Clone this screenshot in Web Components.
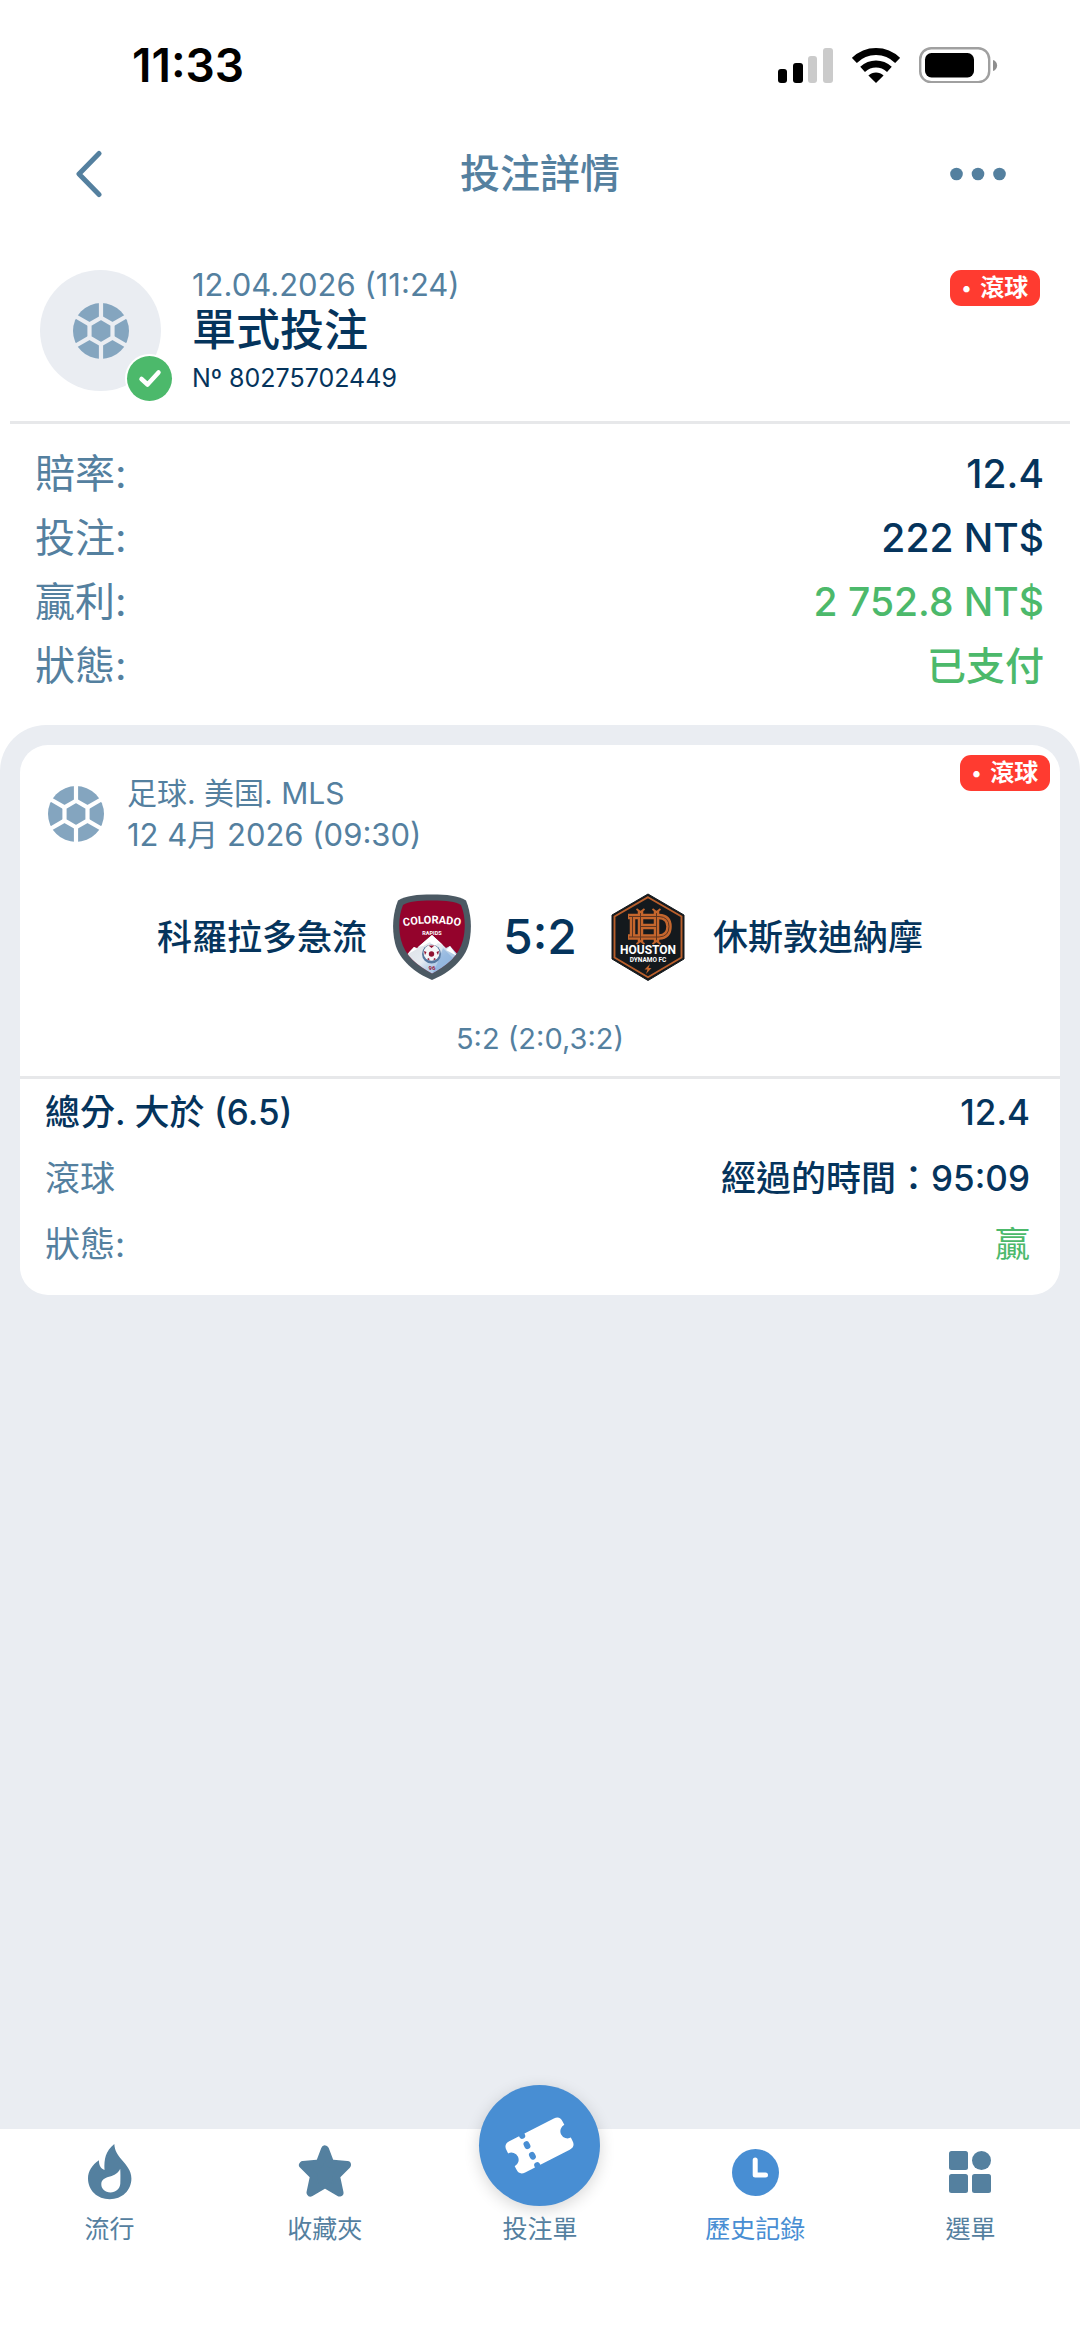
<!DOCTYPE html>
<html lang="zh-Hant">
<head>
<meta charset="utf-8">
<meta name="viewport" content="width=device-width, initial-scale=1">
<title>投注詳情</title>
<style>
  :root {
    --steel: #54809f;
    --navy: #05345c;
    --green: #4cb96b;
    --blue: #488ed3;
    --red: #ff3b30;
    --panel: #eaedf2;
    --line: #e7e8ea;
    --ball: #84a5bf;
  }
  html, body { margin: 0; background: #fff; }
  body {
    min-height: 100vh;
    display: flex;
    flex-direction: column;
    font-family: Inter, "Noto Sans CJK TC", sans-serif;
    color: var(--navy);
  }
</style>
</head>
<body>
<status-bar>11:33</status-bar>
<page-header>投注詳情</page-header>

<bet-summary>
  <span slot="date">12.04.2026 (11:24)</span>
  <span slot="title">單式投注</span>
  <span slot="number">Nº 80275702449</span>
  <live-badge slot="badge">滾球</live-badge>
</bet-summary>

<info-list>
  <info-row><span slot="label">賠率:</span>12.4</info-row>
  <info-row><span slot="label">投注:</span>222 NT$</info-row>
  <info-row tone="good"><span slot="label">贏利:</span>2 752.8 NT$</info-row>
  <info-row tone="good"><span slot="label">狀態:</span>已支付</info-row>
</info-list>

<event-panel>
  <match-card>
    <live-badge slot="badge">滾球</live-badge>
    <span slot="league">足球. 美国. MLS</span>
    <span slot="date">12 4月 2026 (09:30)</span>
    <span slot="home">科羅拉多急流</span>
    <rapids-crest slot="home-crest"></rapids-crest>
    <span slot="score">5:2</span>
    <dynamo-crest slot="away-crest"></dynamo-crest>
    <span slot="away">休斯敦迪納摩</span>
    <span slot="periods">5:2 (2:0,3:2)</span>
    <info-row size="small" strong slot="rows"><span slot="label">總分. 大於 (6.5)</span>12.4</info-row>
    <info-row size="small" slot="rows"><span slot="label">滾球</span>經過的時間：95:09</info-row>
    <info-row size="small" tone="won" slot="rows"><span slot="label">狀態:</span>贏</info-row>
  </match-card>
</event-panel>

<tab-bar>
  <tab-item icon="flame">流行</tab-item>
  <tab-item icon="star">收藏夾</tab-item>
  <tab-item icon="ticket">投注單</tab-item>
  <tab-item icon="clock" active>歷史記錄</tab-item>
  <tab-item icon="grid">選單</tab-item>
</tab-bar>

<script>
const define = (name, html) => customElements.define(name, class extends HTMLElement {
  constructor() {
    super();
    this.attachShadow({ mode: 'open' }).innerHTML = html;
  }
});

define('status-bar', `
  <style>
    :host { display: flex; align-items: center; justify-content: space-between; height: 130px;
      padding: 0 82px 0 132px; box-sizing: border-box; color: #000; font-size: 46px; font-weight: 600; line-height: 52px; }
    .icons { display: flex; align-items: center; gap: 19px; }
    svg { display: block; }
  </style>
  <span><slot></slot></span>
  <div class="icons">
    <svg width="55" height="36" viewBox="0 0 55 36" aria-hidden="true">
      <rect x="0" y="22" width="9" height="14" rx="3"/><rect x="15" y="16" width="10" height="20" rx="3"/>
      <g fill="#cbcbcb"><rect x="30" y="9" width="9" height="27" rx="3"/><rect x="45" y="1" width="10" height="35" rx="3"/></g>
    </svg>
    <svg width="48" height="36" viewBox="0 0 48 36" aria-hidden="true">
      <g fill="none" stroke="#000" stroke-width="7"><path d="M2.4 13.4C14.5 1.5 33.500 1.500 45.600 13.400"/><path d="M10.600 22.400C18.500 15.200 29.500 15.200 37.400 22.400"/></g>
      <path d="M16.400 28.600C20.500 24.600 27.500 24.600 31.600 28.600L24 36Z"/>
    </svg>
    <svg width="79" height="36" viewBox="0 0 79 36" aria-hidden="true">
      <rect x="1.200" y="1.200" width="69" height="34" rx="11" fill="none" stroke="#a0a0a0" stroke-width="2.400"/>
      <rect x="6" y="6" width="49" height="24.500" rx="6.500"/>
      <path d="M74 13C79.500 14.500 79.500 22.500 74 24Z" fill="#8e8e8e"/>
    </svg>
  </div>`);

define('page-header', `
  <style>
    :host { display: grid; grid-template-columns: 1fr auto 1fr; align-items: center; height: 88px;
      padding: 0 66px; box-sizing: border-box; color: var(--steel); }
    h1 { margin: 0; font-size: 40px; font-weight: 500; line-height: 60px; }
    button { border: 0; padding: 8px; background: none; color: inherit; justify-self: start; }
    button:last-child { justify-self: end; }
    svg { display: block; }
  </style>
  <button aria-label="返回"><svg width="30" height="48" viewBox="0 0 30 48"><path d="M25 3.500L5 24L25 44.500" fill="none" stroke="currentColor" stroke-width="5" stroke-linecap="round" stroke-linejoin="round"/></svg></button>
  <h1><slot></slot></h1>
  <button aria-label="更多"><svg width="56" height="14" viewBox="0 0 56 14" fill="currentColor"><circle cx="6.500" cy="7" r="6.300"/><circle cx="28" cy="7" r="6.300"/><circle cx="49.500" cy="7" r="6.300"/></svg></button>`);

define('ball-icon', `
  <style>:host { display: block; color: var(--ball); } svg { display: block; }</style>
  <svg width="56" height="56" viewBox="-28 -28 56 56" aria-hidden="true">
    <mask id="seams" maskUnits="userSpaceOnUse" x="-28" y="-28" width="56" height="56">
      <rect x="-28" y="-28" width="56" height="56" fill="#fff"/>
      <g fill="none" stroke="#000" stroke-width="4.200">
        <path stroke-linejoin="round" d="M0-13.300L11.500-6.650V6.650L0 13.300L-11.500 6.650V-6.650Z"/>
        <path d="M0-13V-30M0 13V30M11.500-6.650L26-15M11.500 6.650L26 15M-11.500 6.650L-26 15M-11.500-6.650L-26-15"/>
      </g>
    </mask>
    <circle r="28" fill="currentColor" mask="url(#seams)"/>
  </svg>`);

define('live-badge', `
  <style>
    :host { display: inline-flex; align-items: center; justify-content: center; gap: 9px; width: 90px; height: 36px;
      border-radius: 11px; background: var(--red); color: #fff; font-size: 24px; font-weight: 700; line-height: 34px; }
    i { font-style: normal; font-size: 20px; }
  </style>
  <i>•</i><span><slot></slot></span>`);

define('bet-summary', `
  <style>
    :host { display: flex; align-items: flex-start; margin: 0 10px; padding: 52px 30px 25px; border-bottom: 3px solid var(--line); }
    .avatar { position: relative; display: grid; place-items: center; width: 121px; height: 121px; border-radius: 50%; background: var(--panel); }
    .check { position: absolute; right: -13px; bottom: -12px; }
    .text { flex: 1; margin-left: 31px; }
    .date { font-size: 31px; line-height: 30px; color: var(--steel); }
    h2 { margin: 0; font-size: 44px; font-weight: 500; line-height: 60px; }
    .number { font-size: 25px; line-height: 36px; }
  </style>
  <div class="avatar"><ball-icon></ball-icon>
    <svg class="check" width="49" height="49" viewBox="0 0 49 49" role="img" aria-label="已支付"><circle cx="24.500" cy="24.500" r="24.500" fill="#fff"/><circle cx="24.500" cy="24.500" r="22.500" fill="#4cb96b"/><path d="M16.500 25L22.500 30.500L33.500 18.500" fill="none" stroke="#fff" stroke-width="4.500" stroke-linecap="round" stroke-linejoin="round"/></svg>
  </div>
  <div class="text">
    <div class="date"><slot name="date"></slot></div>
    <h2><slot name="title"></slot></h2>
    <div class="number"><slot name="number"></slot></div>
  </div>
  <slot name="badge"></slot>`);

define('info-list', `
  <style>:host { display: block; padding: 18px 36px 27px 35px; }</style><slot></slot>`);

define('info-row', `
  <style>
    :host { display: flex; justify-content: space-between; font-size: 40px; line-height: 64px; }
    .label { color: var(--steel); }
    .value { font-size: 39px; font-weight: 500; }
    :host([tone]) .value { color: var(--green); }
    :host([tone="won"]) .value { font-weight: 400; }
    :host([size="small"]) { font-size: 35px; line-height: 66px; }
    :host([size="small"]) .value { font-size: 35px; }
    :host([strong]) .label { color: inherit; font-weight: 500; }
  </style>
  <span class="label"><slot name="label"></slot></span><span class="value"><slot></slot></span>`);

define('event-panel', `
  <style>:host { display: block; flex: 1; padding: 20px; border-radius: 46px 46px 0 0; background: var(--panel); }</style><slot></slot>`);

define('match-card', `
  <style>
    :host { display: block; position: relative; padding: 27px 0 18px; border-radius: 28px; background: #fff; }
    .badge { position: absolute; top: 10px; right: 10px; display: flex; }
    header { display: flex; align-items: center; gap: 23px; padding: 0 28px; color: var(--steel); font-size: 30px; line-height: 42px; }
    .date { font-size: 31px; }
    .teams { display: grid; grid-template-columns: 1fr auto 1fr; align-items: center; gap: 28px; margin-top: 38px; font-size: 35px; font-weight: 500; line-height: 50px; }
    .side { display: flex; align-items: center; gap: 22px; }
    .home { justify-content: flex-end; }
    .score { font-size: 48px; }
    .periods { padding: 39px 0 17px; text-align: center; color: var(--steel); font-size: 29px; line-height: 40px; border-bottom: 3px solid var(--line); }
    .rows { padding: 0 30px 0 25px; }
  </style>
  <div class="badge"><slot name="badge"></slot></div>
  <header><ball-icon></ball-icon><div><div><slot name="league"></slot></div><div class="date"><slot name="date"></slot></div></div></header>
  <div class="teams">
    <div class="side home"><slot name="home"></slot><slot name="home-crest"></slot></div>
    <div class="score"><slot name="score"></slot></div>
    <div class="side"><slot name="away-crest"></slot><slot name="away"></slot></div>
  </div>
  <div class="periods"><slot name="periods"></slot></div>
  <div class="rows"><slot name="rows"></slot></div>`);

const crestStyle = `<style>:host { display: block; } svg { display: block; overflow: visible; }
  text { font-family: Roboto, "Liberation Sans", sans-serif; font-weight: 700; text-anchor: middle; }</style>`;

define('rapids-crest', crestStyle + `
  <svg width="86" height="86" viewBox="0 0 86 86" role="img">
    <defs><linearGradient id="snow" x1="0" x2="1" y1="0" y2="1"><stop offset="0" stop-color="#d9dde2"/><stop offset=".45" stop-color="#e6ebf1"/><stop offset=".6" stop-color="#b7cfe8"/><stop offset="1" stop-color="#8fb4dc"/></linearGradient>
    <clipPath id="in"><path d="M43 6.500C58 6.500 66 7.500 72 11C76 21 77 33 74 46C70 62 57 72 43 79.500C29 72 16 62 12 46C9 33 10 21 14 11C20 7.500 28 6.500 43 6.500Z"/></clipPath></defs>
    <path fill="#4b5963" d="M43 .5C58 .5 69 1.500 77 6.500C82 19 83.500 34 80 49C76 66 60 79 43 86C26 79 10 66 6 49C2.500 34 4 19 9 6.500C17 1.500 28 .5 43 .5Z"/>
    <g clip-path="url(#in)">
      <path fill="#94032c" d="M5 0H81V86H5Z"/>
      <path fill="url(#snow)" d="M16 63L21 57L25 53L28 54L43 41L57 54L61 52L70 62L60 86H28Z"/>
      <path fill="#fff" d="M43 41L54 51L49 49L45 53L41 48L34 52L29 53ZM25 53L19 60L28 55ZM61 52L57 56L68 62Z"/>
      <path fill="#7eaadb" opacity=".55" d="M54 54L66 66L43 80L48 70Z"/>
    </g>
    <circle cx="42.500" cy="60" r="9.500" fill="#55779f"/><circle cx="42.500" cy="58.800" r="8" fill="#f5f5f7"/>
    <g fill="#8f1231"><circle cx="42.500" cy="60" r="2.700"/><path d="M39.500 51.500L45.500 51.500L42.500 54ZM35 57L37.500 58L36 61ZM50 57L47.500 58L49 61ZM38 65L40 64L40.500 66.500ZM47 65L45 64L44.500 66.500Z"/></g>
    <path id="arc" d="M11 33Q43 26 75 33" fill="none"/>
    <text font-size="11" fill="#fff"><textPath href="#arc" startOffset="50%">COLORADO</textPath></text>
    <text x="43" y="40.500" font-size="5.500" fill="#fff">RAPIDS</text>
    <text x="43" y="76" font-size="6" fill="#94203b">96</text>
  </svg>`);

define('dynamo-crest', crestStyle + `
  <svg width="86" height="86" viewBox="0 0 86 86" role="img">
    <path fill="#14191d" stroke="#14191d" stroke-linejoin="round" d="M43 0L79 21V65L43 86.500L7 65V21Z"/>
    <path fill="none" stroke="#b95f2c" stroke-width="1.900" d="M43 3.200L76.500 22.500V63.500L43 83.200L9.500 63.500V22.500Z"/>
    <g fill="none" stroke="#c4662d" stroke-width="5.500">
      <path d="M23 22.500H54Q64 23 64 32.500Q64 42.500 54 43H23"/><path d="M27.500 21V45M35.500 17V48M51.500 17V48M35.500 32.500H51.500"/>
    </g>
    <g fill="none" stroke="#5e3520" stroke-width="1">
      <path d="M24 22.500H54Q64 23 64 32.500Q64 42.500 54 43H24M27.500 23V43M35.500 18V47M51.500 18V47M35.500 32.500H51.500"/>
    </g>
    <g fill="none" stroke="#c4662d" stroke-width="1.800"><path d="M31.500 15L35.500 18L39.500 15M47.500 15L51.500 18L55.500 15M31.500 50L35.500 47L39.500 50M47.500 50L51.500 47L55.500 50"/></g>
    <text x="43" y="60" font-size="12" fill="#fff">HOUSTON</text>
    <text x="43" y="67.500" font-size="6.500" fill="#fff">DYNAMO FC</text>
    <path fill="#c4662d" d="M45 70L39.500 75.500H42.500L41 80L46.500 74H43.500Z"/>
  </svg>`);

define('tab-bar', `
  <style>
    :host { display: block; background: #fff; }
    nav { display: grid; grid-template-columns: repeat(5, 1fr); padding: 13px 2px 93px; }
  </style>
  <nav><slot></slot></nav>`);

const glyphs = {
  flame: `<svg width="44" height="56" viewBox="0 0 44 56"><path fill="currentColor" fill-rule="evenodd" d="M26.300 0C17.500 7 16 15 16.500 26C12.500 24.500 10.800 21 11 16.300C4 21 0 27.500 0 34.500C0 46.500 9.500 55.200 21.700 55.200C34 55.200 43.400 46.500 43.400 34.500C43.400 26 38 21 33.500 15.500C29.500 10.500 26.800 7 26.300 0ZM32.200 24.700C32.500 29 32.500 34 32.300 39.500C32 45 27.500 48.500 22.500 48.500C17 48.500 13.300 44.800 13.300 40.300C13.300 36 16 34.300 21 32.800C26.500 31 30.500 29 32.200 24.700Z"/></svg>`,
  star: `<svg width="54" height="54" viewBox="0 0 54 54"><path fill="currentColor" stroke="currentColor" stroke-width="8" stroke-linejoin="round" d="M27 4.500L32.300 18.500L49 20L38 31L41.500 47.500L27 39L12.500 47.500L16 31L5 20L21.700 18.500Z"/></svg>`,
  clock: `<svg width="47" height="48" viewBox="0 0 47 48"><circle cx="23.500" cy="24.500" r="23.500" fill="currentColor"/><path d="M23.200 12V27H33.500" fill="none" stroke="#fff" stroke-width="5" stroke-linecap="round" stroke-linejoin="round"/></svg>`,
  grid: `<svg width="42" height="42" viewBox="0 0 42 42" fill="currentColor"><rect width="19" height="19" rx="2.500"/><circle cx="32.500" cy="9.500" r="9.500"/><rect y="23" width="19" height="19" rx="2.500"/><rect x="23" y="23" width="19" height="19" rx="2.500"/></svg>`,
  ticket: `<svg width="121" height="121" viewBox="-60.500 -60.500 121 121"><g transform="rotate(-27)">
    <path fill="#fff" d="M-25-17.500H25Q31.500-17.500 31.500-11V-7.200A7.200 7.200 0 0 0 31.500 7.200V11Q31.500 17.500 25 17.500H-25Q-31.500 17.500-31.500 11V7.200A7.200 7.200 0 0 0-31.500-7.200V-11Q-31.500-17.500-25-17.500Z"/>
    <g fill="#488ed3"><rect x="-14" y="-21" width="6" height="7.500" rx="3"/><rect x="-14" y="-10" width="6" height="8" rx="3"/><rect x="-14" y="2" width="6" height="8" rx="3"/><rect x="-14" y="13.500" width="6" height="7.500" rx="3"/></g></g></svg>`
};

customElements.define('tab-item', class extends HTMLElement {
  constructor() {
    super();
    this.attachShadow({ mode: 'open' });
  }
  connectedCallback() {
    this.shadowRoot.innerHTML = `
      <style>
        :host { display: block; color: var(--steel); font-size: 25px; line-height: 30px; }
        :host([active]) { color: var(--blue); }
        a { display: flex; flex-direction: column; align-items: center; gap: 12px; color: inherit; text-decoration: none; }
        .icon { display: grid; place-items: center; height: 60px; }
        svg { display: block; }
        :host([icon="ticket"]) a { gap: 8px; }
        :host([icon="ticket"]) .icon { height: 121px; margin-top: -57px; border-radius: 50%; background: var(--blue);
          box-shadow: 0 4px 16px rgba(0, 0, 0, .16); }
      </style>
      <a href="#${this.getAttribute('icon')}"><span class="icon">${glyphs[this.getAttribute('icon')]}</span><span><slot></slot></span></a>`;
  }
});
</script>
</body>
</html>
